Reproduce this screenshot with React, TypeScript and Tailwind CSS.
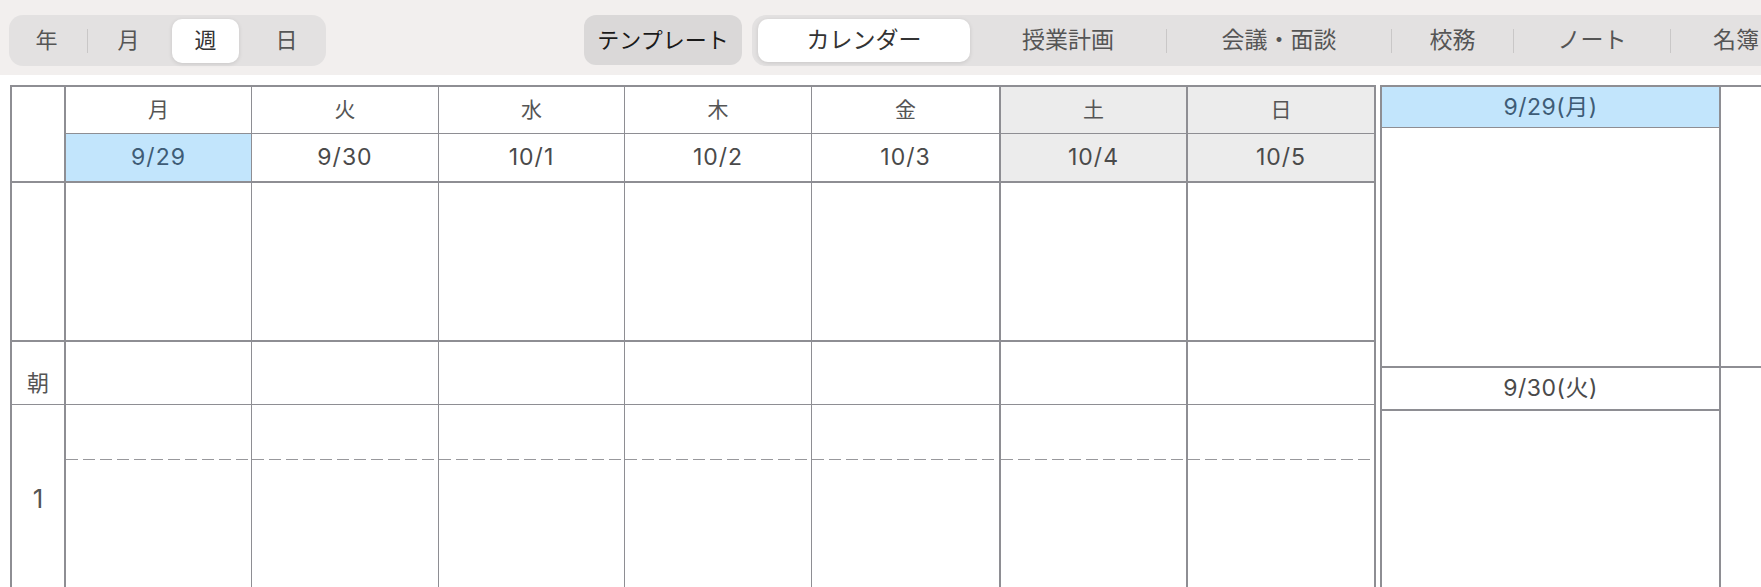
import React from "react";

const B = "border-[#8e8e93]";
const FONT = "font-['Inter','Noto_Sans_CJK_JP',sans-serif]";

type Col = {
  day: string;
  date: string;
  w: string;
  br: string;
  today?: boolean;
  weekend?: boolean;
};

const cols: Col[] = [
  { day: "月", date: "9/29", w: "w-[186px]", br: "border-r", today: true },
  { day: "火", date: "9/30", w: "w-[187px]", br: "border-r" },
  { day: "水", date: "10/1", w: "w-[186px]", br: "border-r" },
  { day: "木", date: "10/2", w: "w-[187px]", br: "border-r" },
  { day: "金", date: "10/3", w: "w-[189px]", br: "border-r-2" },
  { day: "土", date: "10/4", w: "w-[187px]", br: "border-r-2", weekend: true },
  { day: "日", date: "10/5", w: "w-[188px]", br: "border-r-2", weekend: true },
];

function Sep() {
  return <div className="w-px h-[24px] bg-[#c9c7c7]" />;
}

function TopBar() {
  return (
    <div className="h-[75px] bg-[#f2efee] flex items-start pt-[15px] pl-[9px] overflow-hidden">
      {/* left segmented */}
      <div className="shrink-0 h-[51px] rounded-[14px] bg-[#e3e1e1] flex items-center pl-[4px] pr-[6px] text-[22px] text-[#555]">
        <div className="w-[67px] h-[44px] flex items-center justify-center">年</div>
        <div className="w-[15px] flex justify-center">
          <Sep />
        </div>
        <div className="w-[67px] h-[44px] flex items-center justify-center">月</div>
        <div className="ml-[10px] w-[67px] h-[44px] flex items-center justify-center rounded-[10px] bg-white text-[#333] shadow-[0_1px_4px_rgba(0,0,0,0.12)]">
          週
        </div>
        <div className="ml-[14px] w-[67px] h-[44px] flex items-center justify-center">日</div>
      </div>

      {/* template button */}
      <div className="shrink-0 ml-[258px] w-[158px] h-[50px] rounded-[12px] bg-[#dad8d8] flex items-center justify-center text-[22px] text-[#1a1a1a]">
        テンプレート
      </div>

      {/* right segmented */}
      <div className="shrink-0 ml-[10px] h-[51px] rounded-l-[14px] bg-[#e3e1e1] flex items-center pl-[6px] text-[23px] text-[#555]">
        <div className="w-[212px] h-[43px] flex items-center justify-center rounded-[10px] bg-white text-[#333] shadow-[0_1px_4px_rgba(0,0,0,0.12)]">
          カレンダー
        </div>
        <div className="w-[196px] flex items-center justify-center">授業計画</div>
        <Sep />
        <div className="w-[224px] flex items-center justify-center">会議・面談</div>
        <Sep />
        <div className="w-[121px] flex items-center justify-center">校務</div>
        <Sep />
        <div className="w-[156px] flex items-center justify-center">ノート</div>
        <Sep />
        <div className="w-[130px] flex items-center justify-center">名簿</div>
      </div>
    </div>
  );
}

function WeekGrid() {
  return (
    <div className={`shrink-0 border-l-2 border-t-2 ${B} text-[#555]`}>
      {/* header */}
      <div className="flex">
        <div className={`w-[54px] h-[96px] border-r-2 border-b-2 ${B}`} />
        <div className="flex flex-col">
          <div className="flex">
            {cols.map((c) => (
              <div
                key={c.day}
                className={`${c.w} ${c.br} h-[47px] border-b ${B} flex items-center justify-center text-[21px] ${
                  c.weekend ? "bg-[#ececec]" : ""
                }`}
              >
                {c.day}
              </div>
            ))}
          </div>
          <div className="flex">
            {cols.map((c) => (
              <div
                key={c.date}
                className={`${c.w} ${c.br} h-[49px] border-b-2 ${B} flex items-center justify-center text-[23px] tracking-[1px] ${
                  c.today
                    ? "bg-[#c2e5fc] text-[#3e5c76]"
                    : c.weekend
                    ? "bg-[#ececec] text-[#4a4a4a]"
                    : "text-[#4a4a4a]"
                }`}
              >
                {c.date}
              </div>
            ))}
          </div>
        </div>
      </div>

      {/* blank row */}
      <div className="flex">
        <div className={`w-[54px] h-[159px] border-r-2 border-b-2 ${B}`} />
        {cols.map((c) => (
          <div key={c.day} className={`${c.w} ${c.br} h-[159px] border-b-2 ${B}`} />
        ))}
      </div>

      {/* morning row */}
      <div className="flex">
        <div
          className={`w-[54px] h-[63px] border-r-2 border-b ${B} flex justify-center pt-[27px] text-[22px] leading-[28px] text-[#555]`}
        >
          朝
        </div>
        {cols.map((c) => (
          <div key={c.day} className={`${c.w} ${c.br} h-[63px] border-b ${B}`} />
        ))}
      </div>

      {/* period 1 */}
      <div className="flex">
        <div
          className={`w-[54px] h-[186px] border-r-2 ${B} flex items-center justify-center text-[26px] text-[#555]`}
        >
          1
        </div>
        {cols.map((c) => (
          <div key={c.day} className={`${c.w} ${c.br} h-[186px] ${B} flex flex-col`}>
            <div className="h-[54px]" />
            <div className="h-px bg-[repeating-linear-gradient(to_right,#98989c_0px,#98989c_12px,transparent_12px,transparent_17px)]" />
          </div>
        ))}
      </div>
    </div>
  );
}

function DayPanel() {
  return (
    <div className={`shrink-0 ml-[4px] w-[341px] border-l-2 border-r-2 border-t-2 ${B}`}>
      <div
        className={`h-[41px] border-b ${B} bg-[#c2e5fc] text-[#3e5c76] flex items-center justify-center text-[23px] tracking-[0.5px]`}
      >
        9/29(月)
      </div>
      <div className={`h-[240px] border-b-2 ${B}`} />
      <div
        className={`h-[43px] border-b-2 ${B} text-[#4a4a4a] flex items-center justify-center text-[23px] tracking-[0.5px]`}
      >
        9/30(火)
      </div>
      <div className="h-[200px]" />
    </div>
  );
}

export default function App() {
  return (
    <div className={`w-[1761px] h-[587px] overflow-hidden bg-white ${FONT}`}>
      <TopBar />
      <div className="flex pt-[10px] pl-[10px]">
        <WeekGrid />
        <DayPanel />
        <div className={`flex-1 border-t-2 ${B}`}>
          <div className="h-[279px]" />
          <div className="h-[2px] bg-[#8e8e93]" />
        </div>
      </div>
    </div>
  );
}
